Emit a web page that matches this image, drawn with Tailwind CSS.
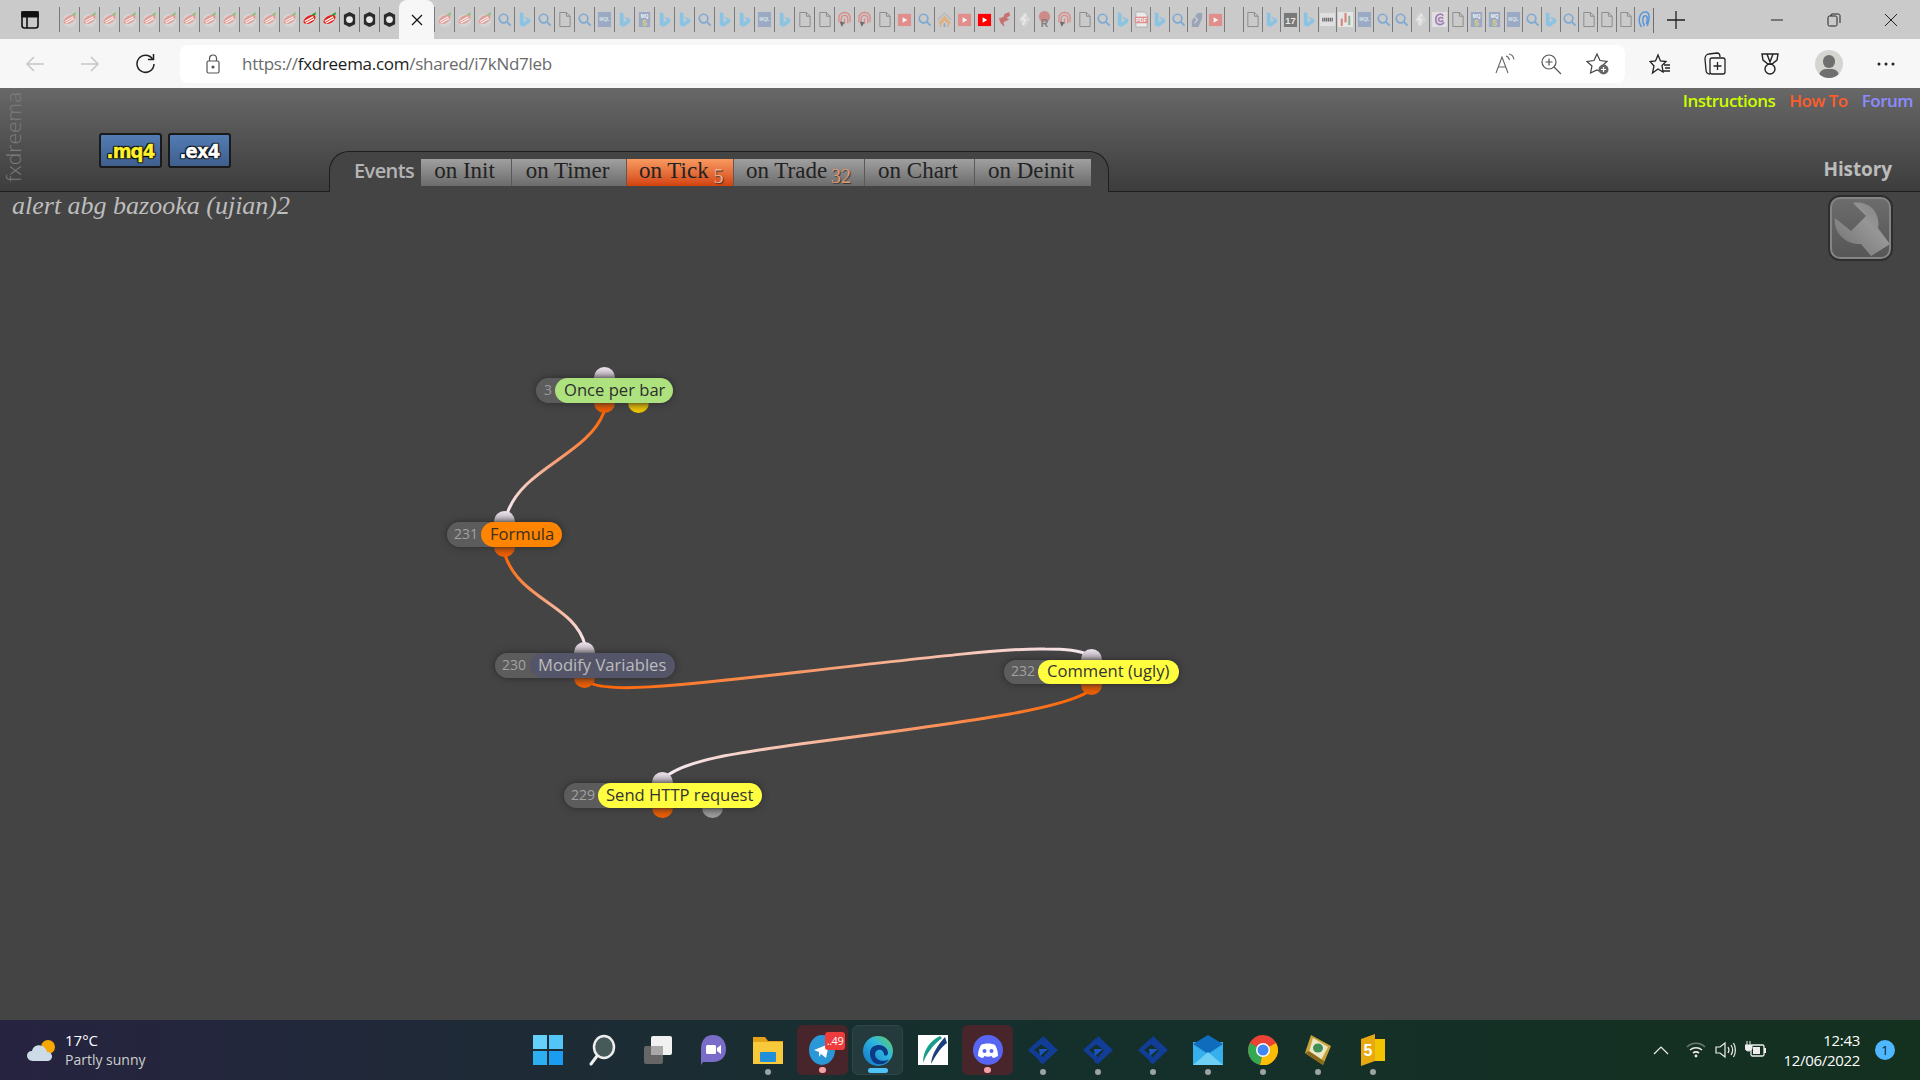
<!DOCTYPE html>
<html lang="en">
<head>
  <meta charset="UTF-8" />
  <title>fxDreema - alert abg bazooka (ujian)2</title>
  <script src="https://cdn.jsdelivr.net/npm/@tailwindcss/browser@4"></script>
</head>
<body class="w-[1920px] h-[1080px] overflow-hidden flex flex-col font-['Open_Sans',sans-serif] bg-[#444444]">

  <!-- icon sprites for the favicon strip -->
  <svg class="hidden">
    <symbol id="sushi" viewBox="0 0 16 18"><circle cx="8" cy="10" r="7" fill="#d8d8d8"/><ellipse cx="8" cy="9" rx="7" ry="4" fill="#e9928a" transform="rotate(-30 8 9)"/><path d="M3 11 12 6M4 13 13 8" stroke="#fff" stroke-width="1.2"/><path d="M10 4 15 1 14 5z" fill="#7fbf6a"/></symbol>
    <symbol id="sushi2" viewBox="0 0 16 18"><circle cx="8" cy="10" r="7" fill="#cfcfcf"/><ellipse cx="8" cy="9" rx="7" ry="4" fill="#e2231a" transform="rotate(-30 8 9)"/><path d="M3 11 12 6M4 13 13 8" stroke="#fff" stroke-width="1.4"/><path d="M10 4 15 1 14 5z" fill="#2f9a2a"/></symbol>
    <symbol id="ring" viewBox="0 0 16 18"><path d="M8 1 14 4V14L8 17 2 14V4z" fill="#2b2b2b"/><circle cx="8" cy="9" r="3.6" fill="#e8e8e8"/></symbol>
    <symbol id="bing" viewBox="0 0 16 18"><path d="M3 1 7 2.500V12L11 9.500 8.500 8 8 6 14 8.500V12L7 17 3 15z" fill="#7cc3ea"/></symbol>
    <symbol id="search" viewBox="0 0 16 18"><circle cx="7" cy="8" r="4.600" fill="none" stroke="#6ca2d4" stroke-width="1.800"/><path d="M10.500 11.500 14.500 15.500" stroke="#6ca2d4" stroke-width="2"/></symbol>
    <symbol id="doc" viewBox="0 0 16 18"><path d="M3 16.500V1.500H10L14 5.500V16.500M10 1.500V5.500H14" fill="none" stroke="#7b7b7b" stroke-width="1"/><path d="M3 16.500H14" stroke="#7b7b7b" stroke-width="1"/></symbol>
    <symbol id="mql" viewBox="0 0 16 18"><rect x="1" y="1" width="14" height="16" fill="#8fa3c4"/><text x="8" y="11" font-size="5" font-weight="700" fill="#dfe6f0" text-anchor="middle" font-family="Liberation Sans">MQL</text></symbol>
    <symbol id="mq5" viewBox="0 0 16 18"><rect x="2" y="1" width="12" height="16" fill="#8fa3c4"/><text x="8" y="7" font-size="5" font-weight="700" fill="#fff" text-anchor="middle" font-family="Liberation Sans">MQ</text><text x="8" y="16" font-size="9" font-weight="700" fill="#e8cf6a" text-anchor="middle" font-family="Liberation Sans">5</text></symbol>
    <symbol id="finger" viewBox="0 0 16 18"><path d="M8 1.500C12 1.500 14 4 14 8V12M2 12V7C2 4 4.500 1.500 8 1.500M4.500 14V8C4.500 6 6 4.500 8 4.500S11.500 6 11.500 8V13M8 8V14" fill="none" stroke="#df7b78" stroke-width="1.400"/><path d="M3 11 8 12 5 17z" fill="#555"/></symbol>
    <symbol id="play" viewBox="0 0 16 18"><rect x="1" y="3" width="14" height="13" fill="#e77f7c"/><path d="M6 6.500 11 9.500 6 12.500z" fill="#fff"/></symbol>
    <symbol id="redplay" viewBox="0 0 16 18"><rect x="1" y="3" width="14" height="13" fill="#f00"/><path d="M6 6.500 11 9.500 6 12.500z" fill="#fff"/></symbol>
    <symbol id="home" viewBox="0 0 16 18"><path d="M1 9 8 2 15 9" fill="none" stroke="#b0b0b0" stroke-width="1.200"/><path d="M2 13 8 6 14 13M4 17V13L8 9 12 13V17" fill="none" stroke="#eba45c" stroke-width="1.400"/><path d="M7 17V13H9V17z" fill="#7ba7d0"/></symbol>
    <symbol id="bird" viewBox="0 0 16 18"><path d="M13 1 14 5 10 7 13 9 7 12 8 17 4 13 2 8 7 6 8 3z" fill="#c75c5c"/></symbol>
    <symbol id="diamond" viewBox="0 0 16 18"><path d="M8 1 14 9 8 17 2 9z" fill="#dadada"/><path d="M10 3 5 9 9 9 6 15" fill="none" stroke="#f4f4f4" stroke-width="1.500"/></symbol>
    <symbol id="rr" viewBox="0 0 16 18"><circle cx="8" cy="6" r="6" fill="#d07a7a"/><text x="8" y="17" font-size="11" font-weight="700" fill="#6e6e6e" text-anchor="middle" font-family="Liberation Sans">R</text></symbol>
    <symbol id="pdf" viewBox="0 0 16 18"><path d="M2 17V1H11L14 4V17z" fill="#f2f2f2" stroke="#888" stroke-width=".6"/><rect x="1" y="6" width="14" height="7" fill="#e58080"/><text x="8" y="12" font-size="6" font-weight="700" fill="#fff" text-anchor="middle" font-family="Liberation Sans">PDF</text></symbol>
    <symbol id="xx" viewBox="0 0 16 18"><path d="M9 2H14V8L10 17H3V10z" fill="#8f9bb5"/><path d="M5 5 9 9 6 13" fill="none" stroke="#c9c9c9" stroke-width="1.500"/></symbol>
    <symbol id="seventeen" viewBox="0 0 16 18"><rect x="1" y="2" width="14" height="15" fill="#666"/><text x="8" y="14" font-size="10" font-weight="700" fill="#eee" text-anchor="middle" font-family="Liberation Sans">17</text></symbol>
    <symbol id="barcode" viewBox="0 0 16 18"><rect x="0" y="2" width="16" height="14" fill="#e6e6e6"/><path d="M3 7V11M5 7V11M7 7V11M9 7V11M11 7V11M13 7V11" stroke="#555" stroke-width="1.400"/></symbol>
    <symbol id="chart" viewBox="0 0 16 18"><rect x="0" y="1" width="16" height="16" fill="#ececec"/><path d="M4 8V16" stroke="#e07070" stroke-width="2.200"/><path d="M8 2V12" stroke="#e07070" stroke-width="2.200"/><path d="M12 5V15" stroke="#7fb07f" stroke-width="2.200"/></symbol>
    <symbol id="cc" viewBox="0 0 16 18"><rect x="0" y="1" width="16" height="16" fill="#e6e6e6"/><path d="M12 5C10 2 4 3 4 9S10 16 13 12M12 8C10 6 7 7 7 9S10 12 12 10" fill="none" stroke="#9a6fb0" stroke-width="1.800"/></symbol>
    <symbol id="swirl" viewBox="0 0 16 18"><path d="M6 17C1 10 4 1 10 1S14 10 12 16M9 16C6 11 7 5 10 5S12 10 11 14" fill="none" stroke="#3d8be0" stroke-width="1.600"/></symbol>
  </svg>

  <!-- browser tab strip -->
  <div class="h-[39px] bg-[#cacaca] flex items-start shrink-0 relative">
    <div class="w-[59px] h-[39px] flex items-center pl-[21px]">
      <svg width="18" height="18" viewBox="0 0 18 18" fill="none" stroke="#111" stroke-width="1.600"><rect x="1" y="1" width="16" height="16" rx="2.500"/><path d="M1 5.500H17M6 5.500V17"/><rect x="1" y="1" width="16" height="4.500" fill="#111"/></svg>
    </div>
    <div id="tabs-a" class="flex h-[39px] items-center"></div>
    <div id="tabs-b" class="flex h-[39px] items-center"></div>
    <div class="h-[25px] mt-[8px] border-l border-[#6f6f6f]"></div>
    <div class="w-[44px] h-[39px] flex items-center justify-center">
      <svg width="18" height="18" viewBox="0 0 18 18" stroke="#222" stroke-width="1.300"><path d="M9 0V18M0 9H18"/></svg>
    </div>
    <div class="ml-auto flex h-[39px] pr-[1px]">
      <div class="w-[57px] flex items-center justify-center"><svg width="14" height="14" viewBox="0 0 14 14" stroke="#222" stroke-width="1"><path d="M1 7H13"/></svg></div>
      <div class="w-[57px] flex items-center justify-center"><svg width="14" height="14" viewBox="0 0 14 14" fill="none" stroke="#222" stroke-width="1"><rect x="1" y="3" width="9" height="10" rx="1.500"/><path d="M4 3V2C4 1.400 4.400 1 5 1H11.500C12.300 1 13 1.700 13 2.500V10"/></svg></div>
      <div class="w-[57px] flex items-center justify-center"><svg width="14" height="14" viewBox="0 0 14 14" stroke="#222" stroke-width="1"><path d="M1 1 13 13M13 1 1 13"/></svg></div>
    </div>
  </div>

  <!-- address bar -->
  <div class="h-[49px] bg-[#f7f7f7] flex items-center shrink-0 relative">
    <div class="w-[180px] flex items-center">
      <svg class="ml-[25px]" width="20" height="18" viewBox="0 0 20 18" fill="none" stroke="#c6c6c6" stroke-width="1.500"><path d="M19 9H2M9 2 2 9 9 16"/></svg>
      <svg class="ml-[35px]" width="20" height="18" viewBox="0 0 20 18" fill="none" stroke="#c6c6c6" stroke-width="1.500"><path d="M1 9H18M11 2 18 9 11 16"/></svg>
      <svg class="ml-[35px]" width="21" height="21" viewBox="0 0 21 21" fill="none" stroke="#222" stroke-width="1.500"><path d="M17.500 6A8.500 8.500 0 1 0 19 11"/><path d="M18.500 1V6.500H13"/></svg>
    </div>
    <div class="w-[1445px] h-[38px] bg-white rounded-lg flex items-center">
      <svg class="ml-[26px]" width="14" height="20" viewBox="0 0 14 20" fill="none" stroke="#555" stroke-width="1.200"><rect x="1" y="7" width="12" height="12" rx="1.500"/><path d="M3.500 7V4.500C3.500 2.500 5 1 7 1S10.500 2.500 10.500 4.500V7"/><circle cx="7" cy="13" r="1" fill="#555"/></svg>
      <span class="ml-[22px] text-[17px] tracking-[-0.28px] text-[#6a6a6a]">https://<span class="text-[#1c1c1c]">fxdreema.com</span>/shared/i7kNd7leb</span>
      <div class="ml-auto flex items-center gap-[24px] pr-[15px]">
        <svg width="22" height="22" viewBox="0 0 22 22" fill="none" stroke="#666" stroke-width="1.100"><path d="M2 20 8 4 14 20M4.500 14H11.500"/><path d="M12 3C14 3.500 15 5 15.500 7M15 1C18 1.500 19.500 4 20 6.500"/></svg>
        <svg width="22" height="22" viewBox="0 0 22 22" fill="none" stroke="#555" stroke-width="1.200"><circle cx="9" cy="9" r="7"/><path d="M14 14 21 21M9 5.500V12.500M5.500 9H12.500"/></svg>
        <svg width="24" height="24" viewBox="0 0 24 24"><path d="M11 2 14 8.500 21 9.500 16 14 17 21 11 18 4.500 21 6 14 1 9.500 8 8.500z" fill="none" stroke="#444" stroke-width="1.200"/><circle cx="17.500" cy="17.500" r="5" fill="#666"/><path d="M17.500 15V20M15 17.500H20" stroke="#fff" stroke-width="1.200"/></svg>
      </div>
    </div>
    <div class="flex-1 relative h-full flex items-center">
      <svg class="ml-[24px]" width="22" height="22" viewBox="0 0 22 22" fill="none" stroke="#222" stroke-width="1.300"><path d="M9 2 11.500 8 17 8.500 13 12.500 14 19 9 16 3.500 20 5 13 1 8.500 6.500 8z"/><path d="M15 12H21M16 15H21M14 18H21"/></svg>
      <svg class="ml-[33px]" width="22" height="24" viewBox="0 0 22 24" fill="none" stroke="#222" stroke-width="1.300"><path d="M6 22C3 22 2 20 2 18L1 7C1 4 3 2 5 2L13 1C15 1 16 3 16 5"/><rect x="6" y="6" width="15" height="16" rx="2"/><path d="M13.500 10V18M9.500 14H17.500"/></svg>
      <svg class="ml-[33px]" width="22" height="24" viewBox="0 0 22 24" fill="none" stroke="#222" stroke-width="1.400"><path d="M3 2H19L18 8 13 12H9L4 8z"/><path d="M8 2 11 10 14 2"/><circle cx="11" cy="17" r="5"/></svg>
      <div class="ml-[34px] w-[28px] h-[28px] rounded-full bg-[#d4d4d0] overflow-hidden relative">
        <div class="absolute left-[8px] top-[5px] w-[12px] h-[13px] rounded-full bg-[#6f6f6f]"></div>
        <div class="absolute left-[4px] top-[19px] w-[20px] h-[14px] rounded-full bg-[#6f6f6f]"></div>
      </div>
      <svg class="ml-[34px]" width="18" height="4" viewBox="0 0 18 4" fill="#222"><circle cx="2" cy="2" r="1.500"/><circle cx="9" cy="2" r="1.500"/><circle cx="16" cy="2" r="1.500"/></svg>
    </div>
  </div>

  <!-- fxDreema page header -->
  <header class="h-[104px] shrink-0 flex items-stretch relative border-b border-[#1e1e1e] bg-linear-to-b from-[#686868] to-[#3d3d3d]">
    <div class="w-[27px] h-[94px] overflow-hidden flex justify-start items-center text-[21px] leading-[25px] font-light text-[#7c7c7c] [writing-mode:vertical-rl] rotate-180">fxdreema</div>
    <div class="flex gap-[6px] ml-[72px] mt-[45px] h-[35px]">
      <button class="w-[63px] h-[35px] border-2 border-[#1a1a1a] rounded-[3px] bg-linear-to-b from-[#537cb4] to-[#3f5f8e] font-['DejaVu_Sans_Condensed','DejaVu_Sans',sans-serif] font-bold text-[20px] tracking-[-0.8px] text-[#fff12c] [-webkit-text-stroke:0.4px_#fff12c] [text-shadow:1px_1px_1px_#000,-1px_-1px_1px_#000,1px_-1px_1px_#000,-1px_1px_1px_#000]">.mq4</button>
      <button class="w-[63px] h-[35px] border-2 border-[#1a1a1a] rounded-[3px] bg-linear-to-b from-[#537cb4] to-[#3f5f8e] font-['DejaVu_Sans_Condensed','DejaVu_Sans',sans-serif] font-bold text-[20px] tracking-[-0.8px] text-white [-webkit-text-stroke:0.4px_#fff] [text-shadow:1px_1px_1px_#000,-1px_-1px_1px_#000,1px_-1px_1px_#000,-1px_1px_1px_#000]">.ex4</button>
    </div>
    <div class="w-[780px] h-[41px] self-end -mb-px ml-[98px] bg-[#444444] border-t border-x border-[#1e1e1e] rounded-t-[20px] flex items-start pl-[24px]">
      <span class="mt-[4px] w-[67px] text-[20px] font-semibold text-[#b4b4b4] tracking-[-0.6px]">Events</span>
      <div class="flex h-[27px] mt-[7px] font-['Liberation_Serif',serif] text-[23px] leading-[24px] text-[#222222]">
        <div class="w-[91px] pr-[3px] text-center bg-linear-to-b from-[#a0a0a0] to-[#6c6c6c] border-r border-[#595959]">on Init</div>
        <div class="w-[115px] pr-[3px] text-center bg-linear-to-b from-[#a0a0a0] to-[#6c6c6c] border-r border-[#595959]">on Timer</div>
        <div class="w-[107px] pl-[12px] bg-linear-to-b from-[#f89a60] to-[#d2410a] border-r border-[#595959] whitespace-nowrap">on Tick <sub class="text-[20px] text-[#f0b08c] [text-shadow:1px_1px_1px_#333] -ml-[1px]">5</sub></div>
        <div class="w-[131px] pl-[12px] bg-linear-to-b from-[#a0a0a0] to-[#6c6c6c] border-r border-[#595959] whitespace-nowrap">on Trade <sub class="text-[20px] text-[#e09a70] [text-shadow:1px_1px_1px_#333] -ml-[2px]">32</sub></div>
        <div class="w-[110px] pr-[3px] text-center bg-linear-to-b from-[#a0a0a0] to-[#6c6c6c] border-r border-[#595959]">on Chart</div>
        <div class="w-[116px] pr-[4px] text-center bg-linear-to-b from-[#a0a0a0] to-[#6c6c6c]">on Deinit</div>
      </div>
    </div>
    <div class="ml-auto flex flex-col items-end justify-between">
      <nav class="flex gap-[14px] pr-[7px] text-[17px] font-semibold tracking-[-0.5px]">
        <a class="text-[#ccff00]">Instructions</a>
        <a class="text-[#ff5c2a]">How To</a>
        <a class="text-[#8c8cff]">Forum</a>
      </nav>
      <span class="pr-[28px] mb-[8px] text-[19px] font-bold text-[#bcbcbc] tracking-[-0.1px]">History</span>
    </div>
  </header>

  <!-- canvas with the block diagram -->
  <main class="relative flex-1 bg-[#444444] flex justify-between items-start">
    <h1 class="pl-[12px] text-[26px] leading-[28px] italic font-['Liberation_Serif',serif] text-[#bdbdbd]">alert abg bazooka (ujian)2</h1>
    <button class="mr-[27px] mt-[3px] w-[65px] h-[66px] rounded-[12px] border-2 border-[#2e2e2e] bg-[#858585] p-[2px]">
      <span class="w-full h-full flex items-center justify-center rounded-[8px] bg-linear-to-b from-[#6c6c6c] to-[#565656] overflow-hidden">
        <svg width="57" height="58" viewBox="4 4 57 58"><defs><linearGradient id="wr" x1="0" y1="1" x2="1" y2="0"><stop offset="0" stop-color="#6f6f6f"/><stop offset=".6" stop-color="#969696"/><stop offset="1" stop-color="#7c7c7c"/></linearGradient></defs><path d="M25 8C41 5 53 18 50 33L62 49 43 61 33 49C18 50 5 38 7 23L23 36 38 21z" fill="url(#wr)"/></svg>
      </span>
    </button>

    <svg class="absolute left-0 top-0" width="1920" height="828" viewBox="0 192 1920 828" fill="none">
      <defs>
        <linearGradient id="w1" gradientUnits="userSpaceOnUse" x1="604" y1="412" x2="507" y2="514"><stop offset="0" stop-color="#ff6400"/><stop offset=".5" stop-color="#f8a27a"/><stop offset="1" stop-color="#f6eaf2"/></linearGradient>
        <linearGradient id="w2" gradientUnits="userSpaceOnUse" x1="505" y1="555" x2="585" y2="645"><stop offset="0" stop-color="#ff6400"/><stop offset=".5" stop-color="#f8a27a"/><stop offset="1" stop-color="#f6eaf2"/></linearGradient>
        <linearGradient id="w3" gradientUnits="userSpaceOnUse" x1="590" y1="0" x2="1091" y2="0"><stop offset="0" stop-color="#ff6400"/><stop offset=".5" stop-color="#f8a27a"/><stop offset="1" stop-color="#f6eaf2"/></linearGradient>
        <linearGradient id="w4" gradientUnits="userSpaceOnUse" x1="1088" y1="0" x2="668" y2="0"><stop offset="0" stop-color="#ff6400"/><stop offset=".5" stop-color="#f8a27a"/><stop offset="1" stop-color="#f6eaf2"/></linearGradient>
      </defs>
      <path d="M604 412C588 455 522 468 507 514" stroke="url(#w1)" stroke-width="3"/>
      <path d="M505 555C520 600 575 605 585 645" stroke="url(#w2)" stroke-width="3"/>
      <path d="M590 683C610 692 660 688 800 672S1010 648 1045 649C1065 649 1080 650 1091 656" stroke="url(#w3)" stroke-width="3"/>
      <path d="M1088 692C1060 708 1000 718 800 744 730 754 690 760 668 775" stroke="url(#w4)" stroke-width="3"/>
    </svg>

    <!-- nodes: left/top are the node's place on the canvas -->
    <div class="absolute left-[536px] top-[186px] w-[137px] h-[25px]">
      <span class="absolute left-[58px] -top-[11px] w-[21px] h-[21px] rounded-full bg-linear-to-b from-[#ece2ec] to-[#8b868b]"></span>
      <span class="absolute left-[58px] top-[14px] w-[21px] h-[21px] rounded-full bg-linear-to-b from-[#a84a10] to-[#f06000]"></span>
      <span class="absolute left-[92px] top-[14px] w-[21px] h-[21px] rounded-full bg-linear-to-b from-[#a88a10] to-[#f2c800]"></span>
      <div class="relative flex h-[25px] text-[16.6px] leading-[23px] shadow-[0_0_7px_#2a2a2a] rounded-full">
        <span class="w-[40px] -mr-[21px] pl-[8px] rounded-l-full bg-[#5c5c5c] text-[#9a9a9a] text-[14px]">3</span>
        <span class="flex-1 pl-[9px] rounded-full bg-[#ade27e] text-[#2e2e2e]">Once per bar</span>
      </div>
    </div>
    <div class="absolute left-[447px] top-[330px] w-[115px] h-[25px]">
      <span class="absolute left-[47px] -top-[11px] w-[21px] h-[21px] rounded-full bg-linear-to-b from-[#ece2ec] to-[#8b868b]"></span>
      <span class="absolute left-[47px] top-[14px] w-[21px] h-[21px] rounded-full bg-linear-to-b from-[#a84a10] to-[#f06000]"></span>
      <div class="relative flex h-[25px] text-[16.6px] leading-[23px] shadow-[0_0_7px_#2a2a2a] rounded-full">
        <span class="w-[55px] -mr-[21px] pl-[7px] rounded-l-full bg-[#5c5c5c] text-[#a2a2a2] text-[14px]">231</span>
        <span class="flex-1 pl-[9px] rounded-full bg-[#ff8400] text-[#3a3020]">Formula</span>
      </div>
    </div>
    <div class="absolute left-[495px] top-[461px] w-[180px] h-[25px]">
      <span class="absolute left-[79px] -top-[11px] w-[21px] h-[21px] rounded-full bg-linear-to-b from-[#ece2ec] to-[#8b868b]"></span>
      <span class="absolute left-[79px] top-[14px] w-[21px] h-[21px] rounded-full bg-linear-to-b from-[#a84a10] to-[#f06000]"></span>
      <div class="relative flex h-[25px] text-[16.6px] leading-[23px] shadow-[0_0_7px_#2a2a2a] rounded-full">
        <span class="w-[56px] -mr-[21px] pl-[7px] rounded-l-full bg-[#5c5c5c] text-[#a2a2a2] text-[14px]">230</span>
        <span class="flex-1 pl-[8px] rounded-full bg-[#55556a] text-[#bcbcbc]">Modify Variables</span>
      </div>
    </div>
    <div class="absolute left-[1004px] top-[468px] w-[175px] h-[24px]">
      <span class="absolute left-[77px] -top-[11px] w-[21px] h-[21px] rounded-full bg-linear-to-b from-[#ece2ec] to-[#8b868b]"></span>
      <span class="absolute left-[77px] top-[14px] w-[21px] h-[21px] rounded-full bg-linear-to-b from-[#a84a10] to-[#f06000]"></span>
      <div class="relative flex h-[24px] text-[16.6px] leading-[22px] shadow-[0_0_7px_#2a2a2a] rounded-full">
        <span class="w-[55px] -mr-[21px] pl-[7px] rounded-l-full bg-[#5c5c5c] text-[#a2a2a2] text-[14px]">232</span>
        <span class="flex-1 pl-[9px] rounded-full bg-[#ffff40] text-[#333333]">Comment (ugly)</span>
      </div>
    </div>
    <div class="absolute left-[564px] top-[591px] w-[198px] h-[25px]">
      <span class="absolute left-[88px] -top-[11px] w-[21px] h-[21px] rounded-full bg-linear-to-b from-[#ece2ec] to-[#8b868b]"></span>
      <span class="absolute left-[88px] top-[14px] w-[21px] h-[21px] rounded-full bg-linear-to-b from-[#a84a10] to-[#f06000]"></span>
      <span class="absolute left-[138px] top-[14px] w-[21px] h-[21px] rounded-full bg-linear-to-b from-[#6a6a6a] to-[#a0a0a0]"></span>
      <div class="relative flex h-[25px] text-[16.6px] leading-[24px] shadow-[0_0_7px_#2a2a2a] rounded-full">
        <span class="w-[55px] -mr-[21px] pl-[7px] rounded-l-full bg-[#5c5c5c] text-[#a2a2a2] text-[14px]">229</span>
        <span class="flex-1 pl-[8px] rounded-full bg-[#ffff40] text-[#333333]">Send HTTP request</span>
      </div>
    </div>
  </main>

  <!-- windows taskbar -->
  <footer class="h-[60px] shrink-0 flex items-stretch bg-linear-to-r from-[#262340] via-[#15302d] to-[#14301f] text-white">
    <div class="w-[520px] flex items-center">
      <svg class="ml-[26px]" width="32" height="26" viewBox="0 0 32 26"><circle cx="22" cy="10" r="7" fill="#f6a800"/><path d="M7 24C3 24 1 21 1 18.500S3 14 6 14C7 9 12 7 16 9C19 10 21 13 21 15C24 15 26 17 26 19.500S24 24 21 24z" fill="#cddbe8"/></svg>
      <div class="ml-[7px] text-[15px] leading-[20px]">
        <div>17°C</div>
        <div class="text-[#cfcfcf] text-[14px]">Partly sunny</div>
      </div>
    </div>
    <div class="flex items-stretch">
      <div class="w-[55px] flex items-center justify-center">
        <svg width="30" height="30" viewBox="0 0 30 30" fill="#35b5f5"><rect width="14" height="14" fill="#65d1fa"/><rect x="16" width="14" height="14" fill="#52c6f8"/><rect y="16" width="14" height="14" fill="#2db0f2"/><rect x="16" y="16" width="14" height="14" fill="#1a9df0"/></svg>
      </div>
      <div class="w-[55px] flex items-center justify-center">
        <svg width="30" height="32" viewBox="0 0 30 32" fill="none"><ellipse cx="16" cy="13" rx="10" ry="11" fill="#465a5a" stroke="#eeeeee" stroke-width="2.500"/><path d="M9 22 3 30" stroke="#eeeeee" stroke-width="3" stroke-linecap="round"/></svg>
      </div>
      <div class="w-[55px] flex items-center justify-center">
        <svg width="30" height="30" viewBox="0 0 30 30"><rect x="1" y="11" width="19" height="18" rx="2" fill="#666666"/><rect x="8" y="1" width="21" height="19" rx="2" fill="#f1f1f1"/><rect x="8" y="11" width="12" height="9" fill="#a8a8a8"/></svg>
      </div>
      <div class="w-[55px] flex items-center justify-center">
        <svg width="30" height="32" viewBox="0 0 30 32"><path d="M15 1C23 1 28 7 28 15S23 28 15 28H5L3 31V15C3 7 7 1 15 1z" fill="#7a6cc9"/><rect x="8" y="11" width="10" height="9" rx="1.500" fill="#fff"/><path d="M19 14 23 11V20L19 17z" fill="#fff"/></svg>
      </div>
      <div class="w-[55px] flex flex-col items-center relative">
        <svg class="mt-[15px]" width="30" height="30" viewBox="0 0 30 30"><path d="M0 2H12L15 6H30V29H0z" fill="#e3a21a"/><rect y="7" width="30" height="22" fill="#f9c93c"/><rect x="7" y="17" width="16" height="10" rx="1" fill="#1e8fd8"/></svg>
        <span class="absolute bottom-[5px] w-[6px] h-[6px] rounded-full bg-[#9ca4a4]"></span>
      </div>
      <div class="w-[55px] flex items-center justify-center">
        <div class="w-[51px] h-[50px] rounded-md bg-[#47252b] relative flex justify-center">
          <svg class="mt-[10px]" width="28" height="30" viewBox="0 0 28 30"><ellipse cx="13" cy="15" rx="13" ry="15" fill="#2a97d6"/><path d="M5 15 20 9 17 23 12 19 10 22 10 17z" fill="#fff"/></svg>
          <span class="absolute right-[3px] top-[7px] h-[18px] w-[20px] rounded-[3px] bg-[#ee3b3b] text-[11px] leading-[18px] text-center tracking-[-0.5px]">..49</span>
          <span class="absolute bottom-[2px] w-[7px] h-[6px] rounded-full bg-[#f5a0a8]"></span>
        </div>
      </div>
      <div class="w-[55px] flex items-center justify-center">
        <div class="w-[51px] h-[50px] rounded-md bg-[#253a3c] border border-[#2e4648] relative flex justify-center">
          <svg class="mt-[10px]" width="30" height="30" viewBox="0 0 30 30"><defs><linearGradient id="edge" x1="0" y1="1" x2="1" y2="0"><stop offset="0" stop-color="#1173c4"/><stop offset=".6" stop-color="#2fb7e0"/><stop offset="1" stop-color="#6bd04f"/></linearGradient></defs><circle cx="15" cy="15" r="15" fill="url(#edge)"/><path d="M7 17C7 11 12 9 16 9S25 12 25 17C25 20 22 20 21 19 21 15 18 13 15 14 11 15 11 22 16 24 20 26 25 24 26 23 23 28 18 29 14 28 10 27 7 23 7 17z" fill="#0b3a86"/></svg>
          <span class="absolute bottom-[1px] w-[20px] h-[5px] rounded-full bg-[#4fc3f7]"></span>
        </div>
      </div>
      <div class="w-[55px] flex items-center justify-center">
        <svg width="30" height="30" viewBox="0 0 30 30"><rect width="30" height="30" fill="#fff"/><path d="M22 1C12 6 5 15 5 28 9 18 15 10 24 3z" fill="#1a9c8c"/><path d="M27 2C20 10 14 18 13 29 18 20 23 12 29 8z" fill="#1a3f7a"/></svg>
      </div>
      <div class="w-[55px] flex items-center justify-center">
        <div class="w-[51px] h-[50px] rounded-md bg-[#47252b] relative flex justify-center">
          <svg class="mt-[10px]" width="30" height="30" viewBox="0 0 30 30"><circle cx="15" cy="15" r="15" fill="#5865f2"/><path d="M8 10C11 8 19 8 22 10 24 13 25 17 25 21 23 22 21 23 20 23L18.500 21C16 22 14 22 11.500 21L10 23C9 23 7 22 5 21 5 17 6 13 8 10z" fill="#fff"/><circle cx="11.500" cy="16" r="2" fill="#5865f2"/><circle cx="18.500" cy="16" r="2" fill="#5865f2"/></svg>
          <span class="absolute bottom-[2px] w-[7px] h-[6px] rounded-full bg-[#f5a0a8]"></span>
        </div>
      </div>
      <div class="w-[55px] flex flex-col items-center relative">
        <svg class="mt-[16px]" width="30" height="28" viewBox="0 0 30 28" fill="#123d96"><path d="M15 0 30 14 15 28 11 26 21 14 11 7z"/><path d="M13 2 0 14 13 26 15 21 6 14 15 7z"/><path d="M11 13H20L12 20z" fill="#1b56c4"/></svg>
        <span class="absolute bottom-[5px] w-[6px] h-[6px] rounded-full bg-[#9ca4a4]"></span>
      </div>
      <div class="w-[55px] flex flex-col items-center relative">
        <svg class="mt-[16px]" width="30" height="28" viewBox="0 0 30 28" fill="#123d96"><path d="M15 0 30 14 15 28 11 26 21 14 11 7z"/><path d="M13 2 0 14 13 26 15 21 6 14 15 7z"/><path d="M11 13H20L12 20z" fill="#1b56c4"/></svg>
        <span class="absolute bottom-[5px] w-[6px] h-[6px] rounded-full bg-[#9ca4a4]"></span>
      </div>
      <div class="w-[55px] flex flex-col items-center relative">
        <svg class="mt-[16px]" width="30" height="28" viewBox="0 0 30 28" fill="#123d96"><path d="M15 0 30 14 15 28 11 26 21 14 11 7z"/><path d="M13 2 0 14 13 26 15 21 6 14 15 7z"/><path d="M11 13H20L12 20z" fill="#1b56c4"/></svg>
        <span class="absolute bottom-[5px] w-[6px] h-[6px] rounded-full bg-[#9ca4a4]"></span>
      </div>
      <div class="w-[55px] flex flex-col items-center relative">
        <svg class="mt-[15px]" width="30" height="30" viewBox="0 0 30 30"><rect y="7" width="30" height="23" fill="#35b0ec"/><path d="M0 9 15 0 30 9 15 19z" fill="#0f6cbd"/><path d="M0 30 15 17 30 30z" fill="#6fd0f5"/></svg>
        <span class="absolute bottom-[5px] w-[6px] h-[6px] rounded-full bg-[#9ca4a4]"></span>
      </div>
      <div class="w-[55px] flex flex-col items-center relative">
        <svg class="mt-[15px]" width="30" height="30" viewBox="0 0 30 30"><circle cx="15" cy="15" r="15" fill="#ea4335"/><path d="M15 15 28 8A15 15 0 0 1 12 30z" fill="#fbbc05"/><path d="M15 15 12 30A15 15 0 0 1 2 8z" fill="#34a853"/><circle cx="15" cy="15" r="7" fill="#fff"/><circle cx="15" cy="15" r="5.500" fill="#4285f4"/></svg>
        <span class="absolute bottom-[5px] w-[6px] h-[6px] rounded-full bg-[#9ca4a4]"></span>
      </div>
      <div class="w-[55px] flex flex-col items-center relative">
        <svg class="mt-[13px]" width="30" height="34" viewBox="0 0 30 34"><path d="M8 2 28 13 20 32 2 20z" fill="#c9a43a"/><path d="M10 5 25 14 18 27 6 19z" fill="#ece6c6"/><ellipse cx="15" cy="15" rx="5" ry="4.500" fill="#3f8f5a"/><path d="M2 20 20 32 21 28 6 18z" fill="#8a6a1a"/></svg>
        <span class="absolute bottom-[5px] w-[6px] h-[6px] rounded-full bg-[#9ca4a4]"></span>
      </div>
      <div class="w-[55px] flex flex-col items-center relative">
        <svg class="mt-[14px]" width="24" height="32" viewBox="0 0 24 32"><path d="M0 5 14 0V27L0 32z" fill="#e8a90e"/><path d="M14 5H24V27H14z" fill="#f2c300"/><text x="7" y="22" font-family="Liberation Sans" font-size="16" font-weight="700" fill="#fff" text-anchor="middle">5</text></svg>
        <span class="absolute bottom-[5px] w-[6px] h-[6px] rounded-full bg-[#9ca4a4]"></span>
      </div>
    </div>
    <div class="flex-1 flex items-center justify-end pr-[25px]">
      <svg width="16" height="9" viewBox="0 0 16 9" fill="none" stroke="#eee" stroke-width="1.200"><path d="M1 8 8 1 15 8"/></svg>
      <svg class="ml-[17px]" width="20" height="16" viewBox="0 0 20 16" fill="none" stroke-width="1.600"><path d="M1 5C6 0 14 0 19 5" stroke="#6a7a74"/><path d="M4 8C7.500 5 12.500 5 16 8" stroke="#eee"/><path d="M7 11C9 9.500 11 9.500 13 11" stroke="#eee"/><circle cx="10" cy="14" r="1.400" fill="#eee" stroke="none"/></svg>
      <svg class="ml-[9px]" width="21" height="18" viewBox="0 0 21 18" fill="none" stroke="#eee" stroke-width="1.200"><path d="M1 6H5L10 2V16L5 12H1z"/><path d="M13 6C14.300 8 14.300 10 13 12M16 4C18 7 18 11 16 14M18.500 2C21 6 21 12 18.500 16"/></svg>
      <svg class="ml-[9px]" width="21" height="18" viewBox="0 0 21 18"><rect x="6" y="4" width="13" height="11" rx="1.500" fill="none" stroke="#eee" stroke-width="1.300"/><rect x="8" y="6" width="7" height="7" fill="#eee"/><rect x="19" y="7" width="2" height="5" fill="#eee"/><path d="M2 0V4M5 0V4M0 4H7V7C7 9 5 10 3.500 10S0 9 0 7z" fill="#eee" stroke="#eee"/></svg>
      <div class="ml-[9px] text-right text-[15px] leading-[20px] w-[85px] tracking-[-0.3px]">
        <div>12:43</div>
        <div>12/06/2022</div>
      </div>
      <span class="ml-[15px] w-[20px] h-[20px] rounded-full bg-[#4db8ff] text-[#10202a] text-[13px] leading-[20px] text-center">1</span>
    </div>
  </footer>

  <script>
    // favicons of the background tabs, in strip order
    const tabA = 'sushi sushi sushi sushi sushi sushi sushi sushi sushi sushi sushi sushi sushi2 sushi2 ring ring ring'.split(' ');
    const tabB = 'sushi sushi sushi search bing search doc search mql bing mq5 bing bing search bing bing mql bing doc doc finger finger doc play search home play redplay bird diamond rr finger doc'.split(' ');
    const tabC = 'search bing pdf bing search xx play none doc bing seventeen bing barcode chart mql search search diamond cc doc mq5 mq5 mql search bing search doc doc doc swirl'.split(' ');
    const cell = (id, cls) => '<div class="' + cls + '">' + (id === 'none' ? '' : '<svg class="w-[15px] h-[17px]' + (id.endsWith('2') || id === 'ring' || id === 'redplay' ? '' : ' opacity-80') + '"><use href="#' + id + '"></use></svg>') + '</div>';
    const wide = 'w-5 h-[25px] flex items-center justify-center border-l border-[#7a7a7a]';
    const narrow = 'w-[18.63px] h-[25px] flex items-center justify-center border-l border-[#7a7a7a]';
    document.getElementById('tabs-a').innerHTML =
      tabA.map(i => cell(i, wide)).join('') +
      '<div class="w-[35px] h-[39px] mt-auto bg-[#f7f7f7] rounded-t-lg flex items-center justify-center"><svg width="12" height="12" viewBox="0 0 12 12" stroke="#111" stroke-width="1.200"><path d="M1 1 11 11M11 1 1 11"/></svg></div>' +
      tabB.map(i => cell(i, wide)).join('');
    document.getElementById('tabs-b').innerHTML = tabC.map(i => cell(i, narrow)).join('');
  </script>
</body>
</html>
